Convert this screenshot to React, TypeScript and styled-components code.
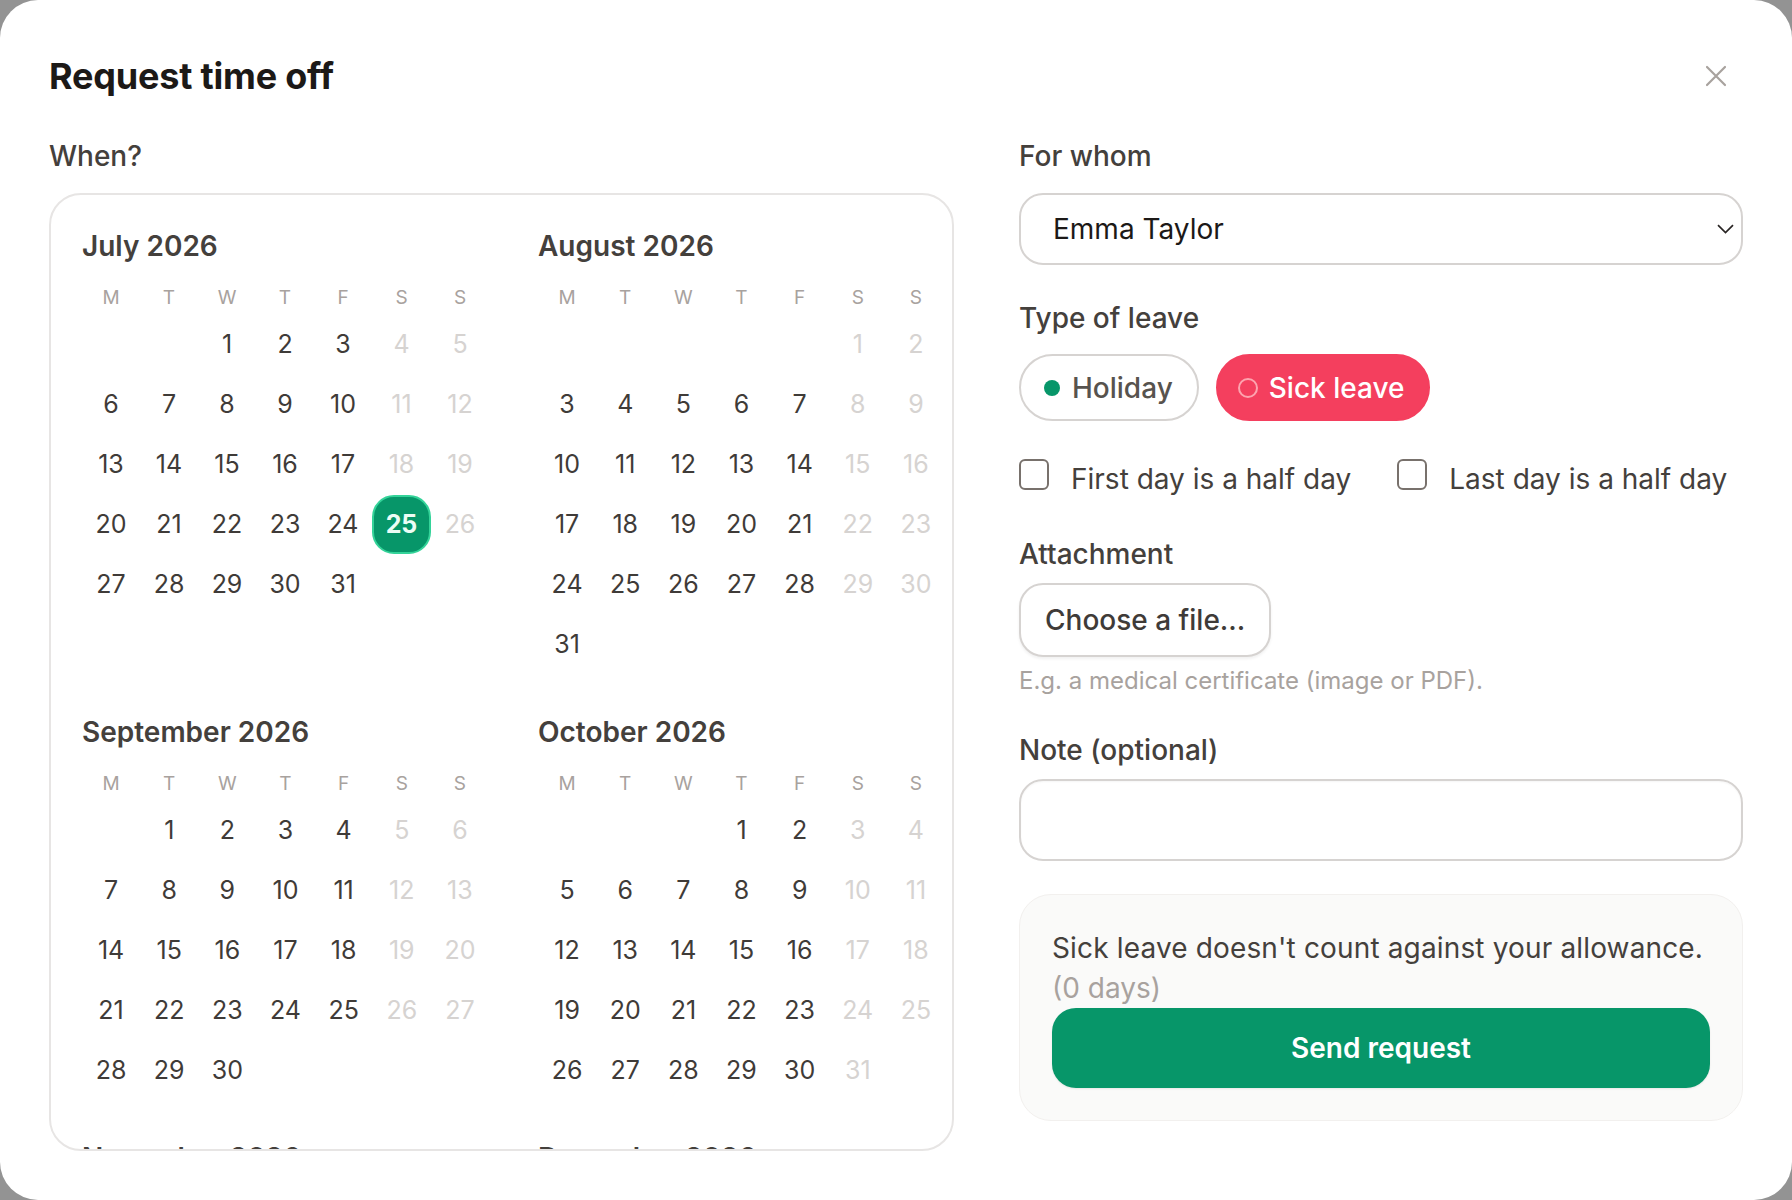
import React from 'react';
import styled, { createGlobalStyle } from 'styled-components';

const GlobalStyle = createGlobalStyle`
  html, body {
    margin: 0;
    padding: 0;
    background: #939393;
  }
  body {
    font-family: Inter, "Noto Sans", sans-serif;
    -webkit-font-smoothing: antialiased;
  }
  * {
    box-sizing: border-box;
  }
`;

const MONTH_NAMES = [
  'January', 'February', 'March', 'April', 'May', 'June',
  'July', 'August', 'September', 'October', 'November', 'December',
];
const WEEKDAYS = ['M', 'T', 'W', 'T', 'F', 'S', 'S'];
const SHOWN_MONTHS = [6, 7, 8, 9];
// only the headings of these peek out at the bottom of the scroll area
const PEEK_MONTHS = [10, 11];
const YEAR = 2026;
const SELECTED = { month: 6, day: 25 };

// monday-first cells, null for the blanks before the 1st
const buildDays = (year: number, month: number) => {
  const offset = (new Date(year, month, 1).getDay() + 6) % 7;
  const count = new Date(year, month + 1, 0).getDate();
  const cells: (number | null)[] = [];
  for (let i = 0; i < offset; i++) cells.push(null);
  for (let d = 1; d <= count; d++) cells.push(d);
  return cells;
};

const App = () => {
  return (
    <>
      <GlobalStyle />
      <Modal>
        <Header>
          <Title>Request time off</Title>
          <CloseButton aria-label="Close">
            <svg width="22" height="22" viewBox="0 0 22 22">
              <path d="M2 2 L20 20 M20 2 L2 20" stroke="#a8a29e" strokeWidth="2.2" strokeLinecap="round" />
            </svg>
          </CloseButton>
        </Header>

        <Body>
          <LeftColumn>
            <FieldLabel $mb={17}>When?</FieldLabel>
            <CalendarBox>
              <MonthGrid>
                {SHOWN_MONTHS.map((m) => {
                  const cells = buildDays(YEAR, m);
                  return (
                    <Month key={m}>
                      <MonthTitle>{MONTH_NAMES[m]} {YEAR}</MonthTitle>
                      <DayGrid>
                        {WEEKDAYS.map((w, i) => (
                          <WeekdayCell key={i}>{w}</WeekdayCell>
                        ))}
                        {cells.map((d, i) => {
                          const weekend = i % 7 >= 5;
                          const selected = d === SELECTED.day && m === SELECTED.month;
                          return (
                            <DayCell key={i} $weekend={weekend}>
                              {selected ? <SelectedMark>{d}</SelectedMark> : d}
                            </DayCell>
                          );
                        })}
                      </DayGrid>
                    </Month>
                  );
                })}
                {PEEK_MONTHS.map((m) => (
                  <Month key={m}>
                    <MonthTitle>{MONTH_NAMES[m]} {YEAR}</MonthTitle>
                  </Month>
                ))}
              </MonthGrid>
            </CalendarBox>
          </LeftColumn>

          <RightColumn>
            <FieldLabel $mb={17}>For whom</FieldLabel>
            <SelectBox>
              <SelectValue>Emma Taylor</SelectValue>
              <svg width="17" height="10" viewBox="0 0 17 10">
                <path d="M1 1.2 L8.5 8.5 L16 1.2" fill="none" stroke="#292524" strokeWidth="1.7" />
              </svg>
            </SelectBox>

            <FieldLabel $mt={33} $mb={16}>Type of leave</FieldLabel>
            <PillRow>
              <Pill>
                <Dot />
                Holiday
              </Pill>
              <Pill $active>
                <Ring />
                Sick leave
              </Pill>
            </PillRow>

            <CheckRow>
              <CheckItem>
                <CheckBox />
                First day is a half day
              </CheckItem>
              <CheckItem>
                <CheckBox />
                Last day is a half day
              </CheckItem>
            </CheckRow>

            <FieldLabel $mt={36} $mb={9}>Attachment</FieldLabel>
            <FileButton>Choose a file...</FileButton>
            <Hint>E.g. a medical certificate (image or PDF).</Hint>

            <FieldLabel $mt={33} $mb={9}>Note (optional)</FieldLabel>
            <NoteInput />

            <Summary>
              <SummaryText>Sick leave doesn't count against your allowance.</SummaryText>
              <SummaryMuted>(0 days)</SummaryMuted>
              <SendButton>Send request</SendButton>
            </Summary>
          </RightColumn>
        </Body>
      </Modal>
    </>
  );
};

const Modal = styled.div`
  width: 100%;
  height: 100vh;
  background: #ffffff;
  border-radius: 38px;
  padding: 49px;
  display: flex;
  flex-direction: column;
  overflow: hidden;
`;

const Header = styled.div`
  height: 54px;
  display: flex;
  align-items: center;
  justify-content: space-between;
  margin-bottom: 33px;
`;

const Title = styled.h1`
  margin: 0;
  font-size: 36px;
  font-weight: 700;
  color: #1c1917;
  letter-spacing: -0.2px;
`;

const CloseButton = styled.button`
  border: none;
  background: none;
  padding: 0;
  margin-right: 16px;
  width: 22px;
  height: 22px;
  display: flex;
  cursor: pointer;
`;

const Body = styled.div`
  flex: 1;
  min-height: 0;
  display: grid;
  grid-template-columns: 905px 1fr;
  column-gap: 65px;
`;

const LeftColumn = styled.div`
  display: flex;
  flex-direction: column;
  min-height: 0;
`;

const RightColumn = styled.div`
  display: flex;
  flex-direction: column;
`;

const FieldLabel = styled.div<{ $mt?: number; $mb?: number }>`
  margin-top: ${(p) => p.$mt || 0}px;
  margin-bottom: ${(p) => p.$mb || 0}px;
  font-size: 28px;
  line-height: 40px;
  font-weight: 500;
  color: #44403c;
`;

const CalendarBox = styled.div`
  flex: 1;
  min-height: 0;
  border: 2px solid #e7e5e4;
  border-radius: 32px;
  padding: 33px 7px 0 31px;
  overflow-y: auto;
  scrollbar-width: none;
  &::-webkit-scrollbar {
    display: none;
  }
`;

const MonthGrid = styled.div`
  display: grid;
  grid-template-columns: 407px 407px;
  column-gap: 49px;
  row-gap: 40px;
  align-items: start;
`;

const Month = styled.div`
  display: flex;
  flex-direction: column;
`;

const MonthTitle = styled.div`
  font-size: 28px;
  line-height: 36px;
  font-weight: 600;
  color: #44403c;
  margin-bottom: 17px;
`;

const DayGrid = styled.div`
  display: grid;
  grid-template-columns: repeat(7, 1fr);
  grid-auto-rows: 60px;
  grid-template-rows: 33px;
`;

const WeekdayCell = styled.div`
  display: flex;
  align-items: center;
  justify-content: center;
  font-size: 19px;
  color: #a8a29e;
`;

const DayCell = styled.div<{ $weekend: boolean }>`
  display: flex;
  align-items: center;
  justify-content: center;
  font-size: 25px;
  color: ${(p) => (p.$weekend ? '#d6d3d1' : '#3f3b38')};
`;

const SelectedMark = styled.span`
  width: 59px;
  height: 59px;
  border-radius: 22px;
  background: #079669;
  border: 2px solid #34d399;
  color: #ecfdf5;
  font-weight: 700;
  display: flex;
  align-items: center;
  justify-content: center;
`;

const SelectBox = styled.div`
  height: 72px;
  border: 2px solid #d6d3d1;
  border-radius: 24px;
  padding: 0 7px 0 32px;
  display: flex;
  align-items: center;
  justify-content: space-between;
`;

const SelectValue = styled.span`
  font-size: 28px;
  color: #1c1917;
`;

const PillRow = styled.div`
  display: flex;
  gap: 17px;
`;

const Pill = styled.div<{ $active?: boolean }>`
  height: 67px;
  border-radius: 34px;
  border: 2px solid ${(p) => (p.$active ? '#f43f5e' : '#d6d3d1')};
  background: ${(p) => (p.$active ? '#f43f5e' : '#ffffff')};
  color: ${(p) => (p.$active ? '#ffffff' : '#57534e')};
  padding: 0 24px 0 ${(p) => (p.$active ? 20 : 23)}px;
  display: flex;
  align-items: center;
  gap: ${(p) => (p.$active ? 11 : 12)}px;
  font-size: 28px;
  font-weight: 500;
`;

const Dot = styled.span`
  width: 16px;
  height: 16px;
  border-radius: 50%;
  background: #079669;
`;

const Ring = styled.span`
  width: 20px;
  height: 20px;
  border-radius: 50%;
  border: 2px solid #fda4af;
`;

const CheckRow = styled.div`
  margin-top: 37px;
  height: 40px;
  display: flex;
  align-items: center;
  gap: 46px;
`;

const CheckItem = styled.label`
  display: flex;
  align-items: center;
  gap: 22px;
  font-size: 28px;
  color: #44403c;
  padding-top: 2px;
`;

const CheckBox = styled.span`
  width: 30px;
  height: 31px;
  border: 2px solid #78716c;
  border-radius: 6px;
  margin-top: -10px;
`;

const FileButton = styled.button`
  align-self: flex-start;
  height: 74px;
  padding: 0 24px;
  border: 2px solid #d6d3d1;
  border-radius: 24px;
  background: #ffffff;
  box-shadow: 0 2px 3px rgba(0, 0, 0, 0.06);
  font-family: inherit;
  font-size: 28px;
  font-weight: 500;
  color: #3f3b38;
`;

const Hint = styled.div`
  margin-top: 8px;
  font-size: 24px;
  line-height: 32px;
  color: #a8a29e;
`;

const NoteInput = styled.textarea`
  height: 82px;
  border: 2px solid #d6d3d1;
  border-radius: 24px;
  box-shadow: inset 0 1px 2px rgba(0, 0, 0, 0.04);
  resize: none;
  outline: none;
  font-family: inherit;
`;

const Summary = styled.div`
  margin-top: 33px;
  border: 1px solid #f2f0ee;
  background: #fafaf9;
  border-radius: 32px;
  padding: 33px 32px 32px;
  display: flex;
  flex-direction: column;
`;

const SummaryText = styled.div`
  font-size: 28px;
  line-height: 40px;
  color: #44403c;
  letter-spacing: 0.15px;
`;

const SummaryMuted = styled.div`
  font-size: 28px;
  line-height: 40px;
  color: #a8a29e;
`;

const SendButton = styled.button`
  height: 80px;
  border: none;
  border-radius: 24px;
  background: #079669;
  color: #ffffff;
  font-family: inherit;
  font-size: 28px;
  font-weight: 600;
  box-shadow: 0 1px 2px rgba(0, 0, 0, 0.08);
`;

export default App;
